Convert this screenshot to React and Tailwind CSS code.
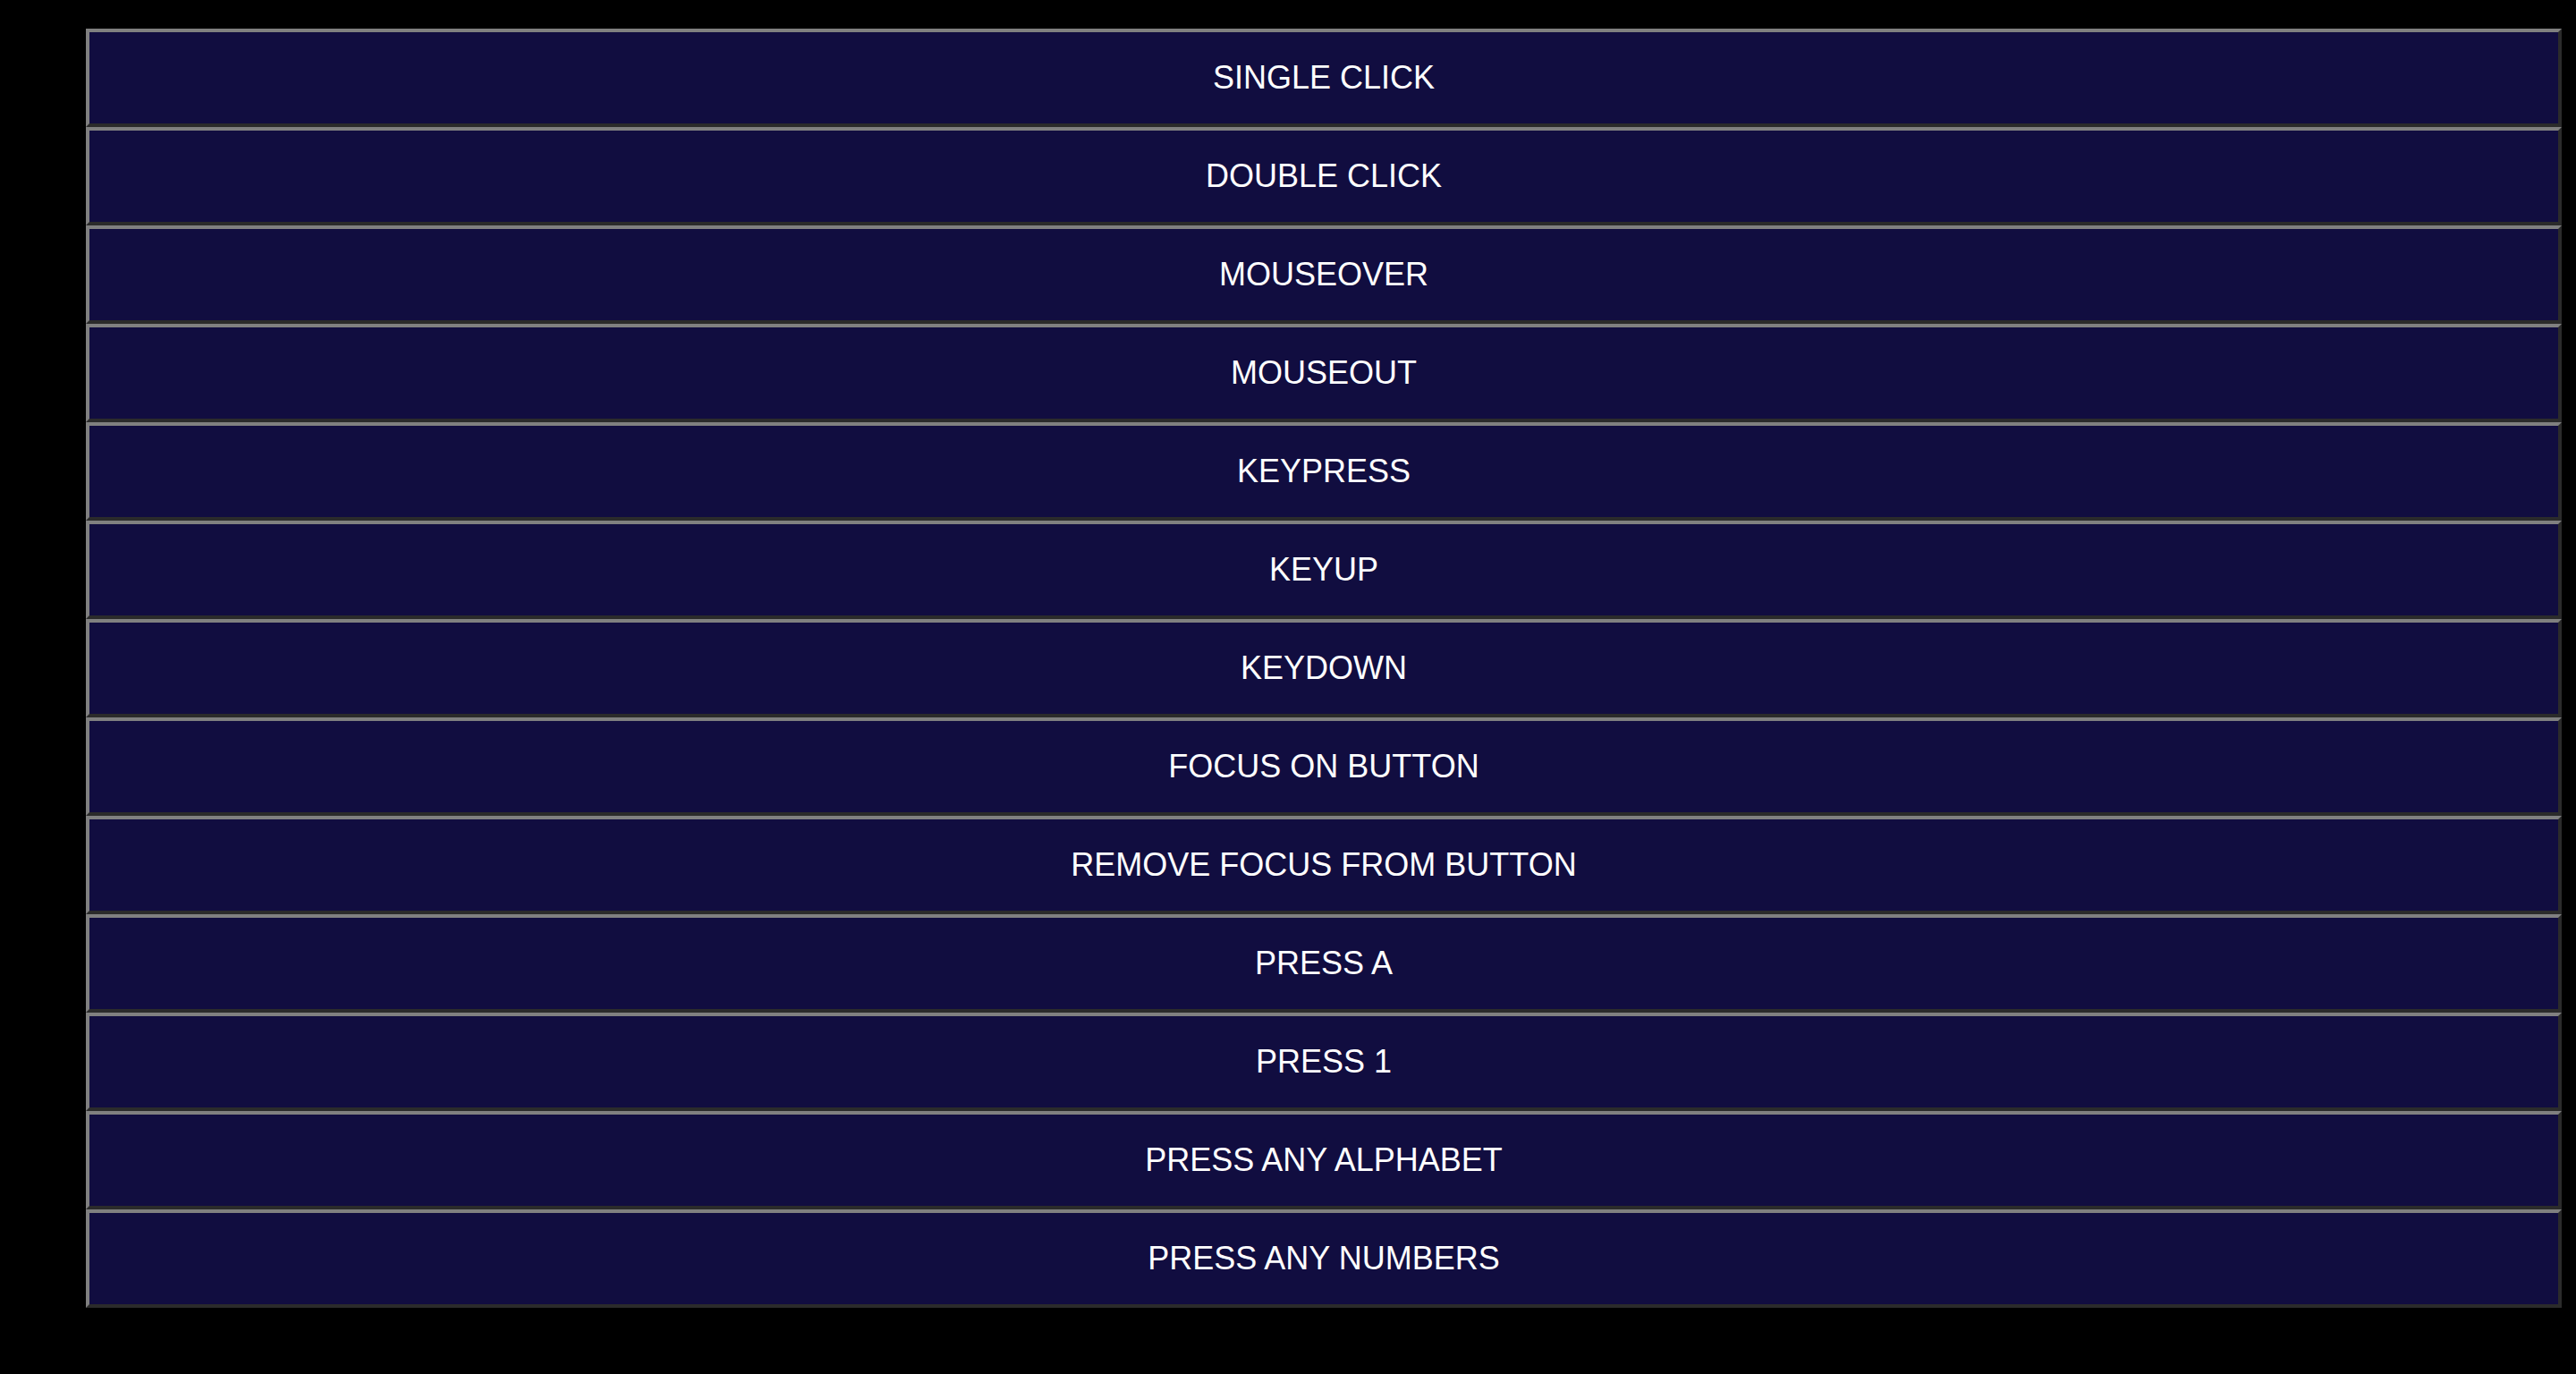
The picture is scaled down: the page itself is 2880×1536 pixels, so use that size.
import React from 'react';

const events = [
  'SINGLE CLICK',
  'DOUBLE CLICK',
  'MOUSEOVER',
  'MOUSEOUT',
  'KEYPRESS',
  'KEYUP',
  'KEYDOWN',
  'FOCUS ON BUTTON',
  'REMOVE FOCUS FROM BUTTON',
  'PRESS A',
  'PRESS 1',
  'PRESS ANY ALPHABET',
  'PRESS ANY NUMBERS',
];

const EventButton = ({ label }) => (
  <button
    type="button"
    className="flex h-[110px] w-[2768px] items-center justify-center border-4 border-t-[#808080] border-l-[#808080] border-b-[#2b2b2b] border-r-[#2b2b2b] bg-[#110d40] text-[36px] text-white font-['Liberation_Sans',Arial,sans-serif]"
  >
    {label}
  </button>
);

const App = () => {
  return (
    <div className="min-h-screen w-full bg-black pt-[32px] pl-[96px]">
      <div className="flex flex-col">
        {events.map((e) => (
          <EventButton key={e} label={e} />
        ))}
      </div>
    </div>
  );
};

export default App;
